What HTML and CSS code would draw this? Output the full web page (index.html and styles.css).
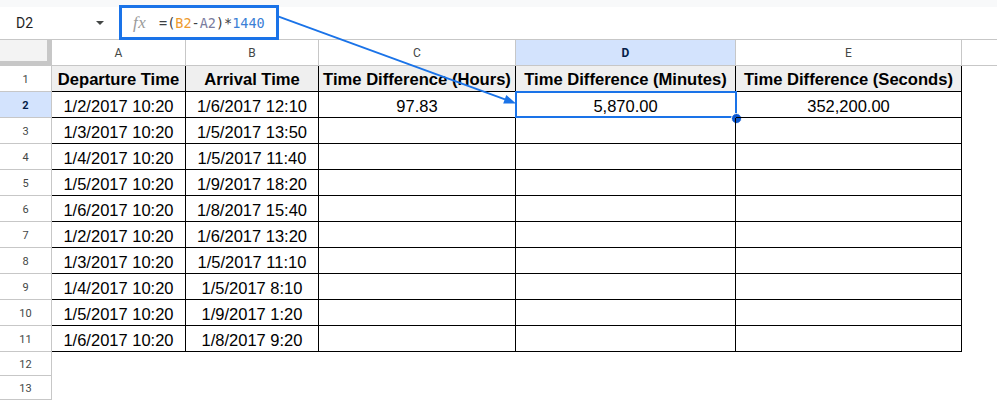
FILE: index.html
```html
<!DOCTYPE html>
<html>
<head>
<meta charset="utf-8">
<link rel="stylesheet" href="styles.css">
</head>
<body>
<div class="app">
  <div class="topstrip"></div>
  <div class="formulabar">
    <div class="namebox"><span class="ref">D2</span><span class="caret"></span></div>
    <div class="formula">
      <span class="fx">fx</span>
      <span class="code"><span class="op">=(</span><span class="r1">B2</span><span class="op">-</span><span class="r2">A2</span><span class="op">)*</span><span class="num">1440</span></span>
    </div>
  </div>
  <div class="sheet">
    <div class="corner"></div>
    <div class="colh">A</div><div class="colh">B</div><div class="colh">C</div><div class="colh sel">D</div><div class="colh">E</div><div class="colh last"></div>

    <div class="rowh">1</div>
    <div class="c hd">Departure Time</div><div class="c hd">Arrival Time</div><div class="c hd">Time Difference (Hours)</div><div class="c hd">Time Difference (Minutes)</div><div class="c hd">Time Difference (Seconds)</div><div class="e"></div>

    <div class="rowh sel">2</div>
    <div class="c">1/2/2017 10:20</div><div class="c">1/6/2017 12:10</div><div class="c">97.83</div><div class="c active">5,870.00<span class="selbox"></span><span class="handle"></span></div><div class="c">352,200.00</div><div class="e"></div>

    <div class="rowh">3</div>
    <div class="c">1/3/2017 10:20</div><div class="c">1/5/2017 13:50</div><div class="c"></div><div class="c"></div><div class="c"></div><div class="e"></div>

    <div class="rowh">4</div>
    <div class="c">1/4/2017 10:20</div><div class="c">1/5/2017 11:40</div><div class="c"></div><div class="c"></div><div class="c"></div><div class="e"></div>

    <div class="rowh">5</div>
    <div class="c">1/5/2017 10:20</div><div class="c">1/9/2017 18:20</div><div class="c"></div><div class="c"></div><div class="c"></div><div class="e"></div>

    <div class="rowh">6</div>
    <div class="c">1/6/2017 10:20</div><div class="c">1/8/2017 15:40</div><div class="c"></div><div class="c"></div><div class="c"></div><div class="e"></div>

    <div class="rowh">7</div>
    <div class="c">1/2/2017 10:20</div><div class="c">1/6/2017 13:20</div><div class="c"></div><div class="c"></div><div class="c"></div><div class="e"></div>

    <div class="rowh">8</div>
    <div class="c">1/3/2017 10:20</div><div class="c">1/5/2017 11:10</div><div class="c"></div><div class="c"></div><div class="c"></div><div class="e"></div>

    <div class="rowh">9</div>
    <div class="c">1/4/2017 10:20</div><div class="c">1/5/2017 8:10</div><div class="c"></div><div class="c"></div><div class="c"></div><div class="e"></div>

    <div class="rowh">10</div>
    <div class="c">1/5/2017 10:20</div><div class="c">1/9/2017 1:20</div><div class="c"></div><div class="c"></div><div class="c"></div><div class="e"></div>

    <div class="rowh">11</div>
    <div class="c">1/6/2017 10:20</div><div class="c">1/8/2017 9:20</div><div class="c"></div><div class="c"></div><div class="c"></div><div class="e"></div>

    <div class="rowh">12</div>
    <div class="e"></div><div class="e"></div><div class="e"></div><div class="e"></div><div class="e"></div><div class="e"></div>

    <div class="rowh">13</div>
    <div class="e"></div><div class="e"></div><div class="e"></div><div class="e"></div><div class="e"></div><div class="e"></div>
  </div>

  <svg class="annot" width="997" height="402" viewBox="0 0 997 402">
    <rect x="120.5" y="6.5" width="157" height="32" fill="none" stroke="#1a73e8" stroke-width="3"/>
    <line x1="278" y1="16.3" x2="505" y2="99.4" stroke="#1a73e8" stroke-width="1.8"/>
    <polygon points="516,103.5 503.2,103.6 506.3,95.1" fill="#1a73e8"/>
  </svg>
</div>
</body>
</html>
```

FILE: styles.css
```css
* { box-sizing: border-box; }
html, body { margin: 0; padding: 0; background: #fff; }
body { width: 997px; height: 402px; overflow: hidden; font-family: "Liberation Sans", Arial, sans-serif; }

.app { position: relative; width: 997px; height: 402px; overflow: hidden; }

.topstrip { height: 7px; background: #f8f9fa; }

.formulabar {
  height: 33px;
  display: flex;
  align-items: center;
  border-bottom: 1px solid #c7c7c7;
  background: #fff;
}

.namebox {
  width: 120px;
  display: flex;
  align-items: center;
  padding-left: 16px;
}
.namebox .ref {
  font-family: Roboto, "Noto Sans", sans-serif;
  font-size: 14px;
  color: #1f1f1f;
}
.namebox .caret {
  margin-left: 63px;
  width: 0; height: 0;
  border-left: 4px solid transparent;
  border-right: 4px solid transparent;
  border-top: 4px solid #444746;
}

.formula { display: flex; align-items: center; padding-left: 13px; }
.fx {
  font-family: "Liberation Serif", "DejaVu Serif", serif;
  font-style: italic;
  font-size: 17px;
  color: #9a9a9a;
  width: 26px;
  letter-spacing: 0.5px;
}
.code {
  font-family: "DejaVu Sans Mono", "Liberation Mono", monospace;
  font-size: 13.5px;
  color: #3c4043;
}
.code .r1 { color: #ee9b2f; }
.code .r2 { color: #7a7c9e; }
.code .num { color: #3b7fd6; }

.sheet {
  display: grid;
  grid-template-columns: 52px 134px 133px 197px 220px 226px 1fr;
  grid-template-rows: repeat(12, 26px) 24px 24px;
}

.corner {
  background: #f3f3f3;
  border-right: 5px solid #c7c7c7;
  border-bottom: 5px solid #c7c7c7;
}

.colh {
  display: flex; align-items: center; justify-content: center;
  font-family: Roboto, "Noto Sans", sans-serif;
  font-size: 12px;
  color: #444746;
  border-right: 1px solid #c7c7c7;
  border-bottom: 1px solid #c7c7c7;
  background: #fff;
}
.colh.last { border-right: none; }
.colh.sel, .rowh.sel { background: #d3e3fd; color: #041e49; font-weight: bold; }

.rowh {
  display: flex; align-items: center; justify-content: center;
  padding-top: 2px;
  font-family: Roboto, "Noto Sans", sans-serif;
  font-size: 11px;
  color: #444746;
  border-right: 1px solid #c7c7c7;
  border-bottom: 1px solid #c7c7c7;
  background: #fff;
}

.c {
  position: relative;
  display: flex; align-items: center; justify-content: center;
  padding-top: 3px;
  font-size: 16.5px;
  color: #000;
  border-right: 1px solid #000;
  border-bottom: 1px solid #000;
  white-space: nowrap;
}
.c.hd { background: #efefef; font-weight: bold; font-size: 16.6px; }

.e { background: #fff; }

.selbox {
  position: absolute;
  top: -1px; left: -1px; right: -2px; bottom: -1px;
  border: 2px solid #1a73e8;
}
.handle {
  position: absolute;
  left: 215px; top: 20.5px;
  width: 11px; height: 11px;
  border-radius: 50%;
  background: #0b57d0;
  border: 1px solid #fff;
}

.annot { position: absolute; left: 0; top: 0; pointer-events: none; }
```
